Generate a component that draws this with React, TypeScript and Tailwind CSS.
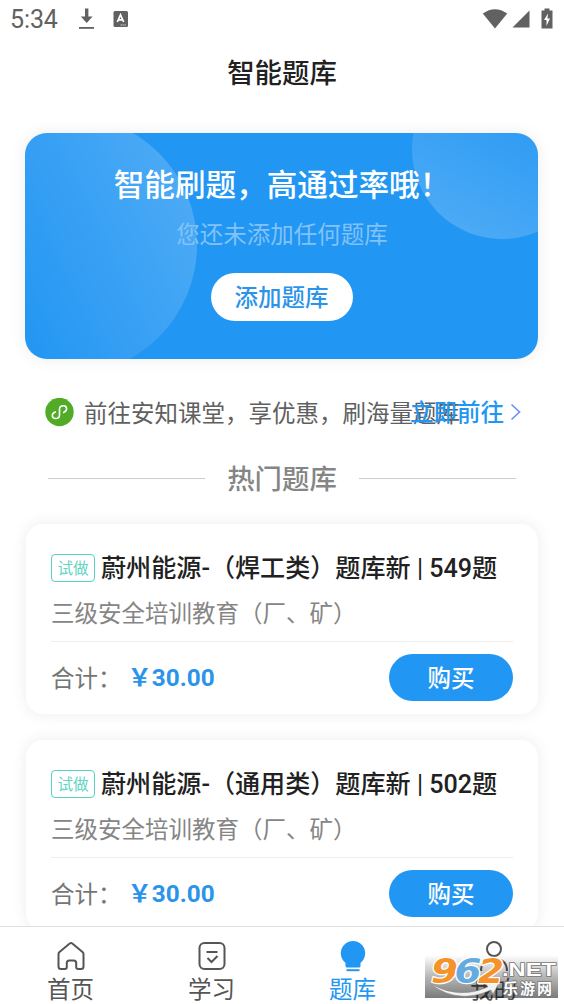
import React from 'react';

interface Bank {
  id: number;
  title: string;
  count: number;
  desc: string;
  price: string;
}

const banks: Bank[] = [
  { id: 1, title: '蔚州能源-（焊工类）题库新', count: 549, desc: '三级安全培训教育（厂、矿）', price: '30.00' },
  { id: 2, title: '蔚州能源-（通用类）题库新', count: 502, desc: '三级安全培训教育（厂、矿）', price: '30.00' },
];

function StatusBar() {
  return (
    <div className="flex h-[38px] items-center justify-between pl-[10px] pr-[10px] text-[#616161]">
      <div className="flex items-center">
        <span className="w-[49px] whitespace-nowrap pt-px text-[25px] leading-none tracking-[-0.1px]">5:34</span>
        <svg className="ml-[19px]" width="17" height="22" viewBox="0 0 17 22" fill="currentColor">
          <path d="M7 0.500h3.400v8h4.200L8.700 15 2.800 8.500H7z" />
          <rect x="1" y="19" width="15" height="1.800" />
        </svg>
        <svg className="ml-[18px]" width="16" height="18" viewBox="0 0 16 18">
          <rect x="0.500" y="1" width="14.500" height="16" rx="1.500" fill="#616161" />
          <path d="M4.300 12 7.500 4.800 10.700 12M5.500 9.800h4" fill="none" stroke="#fff" strokeWidth="1.700" />
          <path d="M7.500 15h5.500" stroke="#ccc" strokeDasharray="1.500 0.500" />
        </svg>
      </div>
      <div className="flex items-center">
        <svg width="26" height="20" viewBox="0 0 26 20" fill="currentColor">
          <path d="M0.800 4.600Q13-4.200 25.200 4.600L13 19.400z" />
        </svg>
        <svg className="ml-[4px]" width="18" height="18" viewBox="0 0 18 18" fill="currentColor">
          <path d="M17.500 0.500v17H0.500z" />
        </svg>
        <svg className="ml-[11px] mr-px -mt-px" width="12" height="21" viewBox="0 0 12 21">
          <path d="M3.500 0.500h5v2H11.500V20.500H0.500V2.500h3z" fill="#616161" />
          <path d="M7 5.500 3 12h2.500v6L9 10.500H6.500z" fill="#fff" />
        </svg>
      </div>
    </div>
  );
}

function Banner() {
  return (
    <section className="relative ml-[25px] mr-[26px] mt-[25px] flex h-[226px] flex-col items-center overflow-hidden rounded-[22px] bg-[#2296f3] shadow-[0_0_16px_rgba(0,0,0,0.08)]">
      <div className="absolute -left-[88px] -top-[18px] size-[260px] rounded-full bg-linear-[65deg] from-white/0 from-25% to-white/19 to-88%" />
      <div className="absolute -top-[74px] left-[387px] size-[180px] rounded-full bg-linear-[28deg] from-white/21 from-5% to-white/0 to-85%" />
      <h2 className="relative mt-[30px] pl-px text-[30.600px] font-medium leading-[46px] text-white">智能刷题，高通过率哦！</h2>
      <p className="relative mt-[8px] pl-px text-[23.500px] leading-[36px] text-[#81c2f8]">您还未添加任何题库</p>
      <button className="relative mt-[20px] h-[48px] w-[142px] rounded-full bg-white pt-[4px] text-[23.500px] font-medium leading-none text-[#2b94ea]">
        添加题库
      </button>
    </section>
  );
}

function PromoRow() {
  return (
    <div className="relative mt-[33px] flex h-[40px] items-center pl-[45px]">
      <svg width="29" height="29" viewBox="0 0 29 29" fill="none">
        <circle cx="14.500" cy="14" r="14.200" fill="#52ab27" />
        <path
          d="M10.300 13.900c-4.300 1.500-3.700 6.600.2 6.600 2.400 0 4-1.500 4-3.600v-5.600c0-2.100 1.600-3.500 3.800-3.500 4.200 0 4.500 5.100.3 6.600"
          stroke="#fff"
          strokeWidth="1.600"
          strokeLinecap="round"
        />
      </svg>
      <span className="ml-[10px] mt-[6px] whitespace-nowrap text-[23.500px] text-[#606060]">前往安知课堂，享优惠，刷海量题库</span>
      <div className="absolute right-[42px] top-0 flex h-[40px] items-center">
        <span className="pt-[3px] text-[23.500px] font-medium text-[#2296f3]">立即前往</span>
        <svg className="ml-[6px]" width="12" height="18" viewBox="0 0 12 18" fill="none">
          <path d="m1.500 1.500 8 7.500-8 7.500" stroke="#6f93f7" strokeWidth="1.700" />
        </svg>
      </div>
    </div>
  );
}

function BankCard({ bank }: { bank: Bank }) {
  return (
    <article className="h-[190px] shrink-0 rounded-[17px] bg-white px-[25px] pt-[24px] shadow-[0_0_16px_rgba(0,0,0,0.08)]">
      <div className="flex h-[40px] items-center">
        <span className="flex h-[28px] w-[44px] shrink-0 items-center justify-center rounded-[4px] border border-[#55d3bf] pt-[3px] text-[15.600px] text-[#63d5c3]">
          试做
        </span>
        <h3 className="ml-[6px] whitespace-nowrap pt-px text-[25.100px] font-medium text-[#212121]">
          {bank.title} <span className="font-normal">|</span> {bank.count}题
        </h3>
      </div>
      <p className="mt-[8px] text-[23.500px] leading-[36px] text-[#858585]">{bank.desc}</p>
      <div className="mt-[9px] flex h-[72px] items-center border-t border-[#eeeeee]">
        <span className="pt-[4px] text-[23.500px] text-[#757575]">合计：</span>
        <span className="ml-[6px] pt-px text-[24.300px] font-bold text-[#2b94ea]">￥{bank.price}</span>
        <button className="ml-auto h-[47px] w-[124px] rounded-full bg-[#2296f3] pt-[4px] text-[23.500px] font-medium leading-none text-white">
          购买
        </button>
      </div>
    </article>
  );
}

function TabItem({ label, active, children }: { label: string; active?: boolean; children: React.ReactNode }) {
  return (
    <div className={`flex flex-1 flex-col items-center pt-[13px] ${active ? 'text-[#2296f3]' : 'text-[#555555]'}`}>
      <svg className="shrink-0" width="32" height="32" viewBox="0 0 32 32" fill="none" stroke="currentColor" strokeWidth="2">
        {children}
      </svg>
      <span className="mt-[2px] text-[23.500px] leading-[32px]">{label}</span>
    </div>
  );
}

function TabBar() {
  return (
    <nav className="relative flex h-[78px] shrink-0 border-t border-[#e0e0e0] bg-white">
      <TabItem label="首页">
        <path
          d="M14.700 3.500q1.300-1 2.600 0L27.500 12q1 .9 1 2.300v12.200q0 2.500-2.500 2.500h-2.800q-2 0-2-2v-4q0-2.500-2.500-2.500h-4.400q-2.500 0-2.500 2.500v4q0 2-2 2H6q-2.500 0-2.500-2.500V14.300q0-1.400 1-2.300z"
          strokeLinejoin="round"
        />
      </TabItem>
      <TabItem label="学习">
        <rect x="3.500" y="3" width="25" height="26" rx="5" />
        <path d="M10.500 12h11M11.500 18l4 4 6-6" />
      </TabItem>
      <TabItem label="题库" active>
        <path d="M16 1a12.300 12.300 0 0 1 7.500 22V26q0 1.500-1.500 1.500H10q-1.500 0-1.500-1.500v-3A12.300 12.300 0 0 1 16 1z" fill="currentColor" stroke="none" />
        <path d="M9.500 30.200h13" />
      </TabItem>
      <TabItem label="我的">
        <circle cx="16" cy="9" r="7" />
        <path d="M3 31q0-12 13-12t13 12" />
      </TabItem>
      <Watermark />
    </nav>
  );
}

function Watermark() {
  return (
    <div className="absolute left-[425px] top-[28px] h-[43px] w-[133px] bg-linear-to-b from-black/0 via-black/28 to-black/52">
      <svg className="block overflow-visible" width="133" height="43" viewBox="0 0 133 43">
        <path d="M6 29q28 16 57 3l-2-3 13-1-6 11-2-4Q32 50 6 29z" fill="#f2f2f2" stroke="#888" strokeWidth="0.500" />
        <g
          fontFamily="DejaVu Sans"
          fontWeight="bold"
          fontStyle="italic"
          fontSize="34"
          stroke="#fff"
          strokeWidth="2.500"
          strokeLinejoin="round"
          paintOrder="stroke"
        >
          <text x="6" y="27.500" fill="#f6922a" textLength="27" lengthAdjust="spacingAndGlyphs">9</text>
          <text x="29.500" y="27.500" fill="#64ace0" textLength="27" lengthAdjust="spacingAndGlyphs">6</text>
          <text x="53" y="27.500" fill="#f6922a" textLength="26" lengthAdjust="spacingAndGlyphs">2</text>
        </g>
        <g fill="#fff" stroke="#777" strokeWidth="1.500" paintOrder="stroke" fontWeight="bold">
          <text x="77" y="21" fontFamily="Liberation Sans" fontSize="19" textLength="54" lengthAdjust="spacingAndGlyphs">.NET</text>
          <text x="78" y="38.500" fontFamily="Noto Sans CJK SC" fontSize="15" textLength="49">乐游网</text>
        </g>
      </svg>
    </div>
  );
}

export default function App() {
  return (
    <div className="flex h-[1004px] w-[564px] flex-col overflow-hidden bg-white font-[Roboto,'Noto_Sans_CJK_SC',sans-serif]">
      <main className="min-h-0 flex-1 overflow-hidden">
        <StatusBar />
        <h1 className="mt-[14px] h-[56px] pt-[2px] text-center text-[27.400px] font-medium leading-[40px] text-[#212121]">智能题库</h1>
        <Banner />
        <PromoRow />
        <div className="mt-[26px] flex h-[40px] items-center justify-center gap-[22px]">
          <span className="h-px w-[157px] bg-[#cccccc]" />
          <span className="pt-[5px] text-[27.400px] font-medium text-[#858585]">热门题库</span>
          <span className="h-px w-[157px] bg-[#cccccc]" />
        </div>
        <div className="mx-[26px] mt-[26px] flex flex-col gap-[26px]">
          {banks.map((bank) => (
            <BankCard key={bank.id} bank={bank} />
          ))}
        </div>
      </main>
      <TabBar />
    </div>
  );
}
